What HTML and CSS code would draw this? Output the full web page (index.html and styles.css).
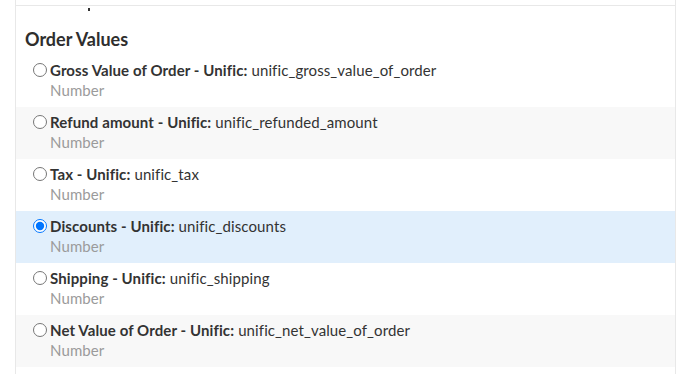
FILE: index.html
```
<!DOCTYPE html>
<html>

	<head>
		<meta charset="UTF-8">
		<title>Order Values</title>
		<link rel="stylesheet" href="styles.css">
	</head>

	<body>
		<div id="wrap">
			<div class="prev"></div>
			<div class="section">
				<span class="tick"></span>
				<h3>Order Values</h3>
				<ul class="fields">
					<li>
						<label><input type="radio" name="field"><b>Gross Value of Order - Unific:</b> unific_gross_value_of_order</label>
						<p>Number</p>
					</li>
					<li class="alt">
						<label><input type="radio" name="field"><b>Refund amount - Unific:</b> unific_refunded_amount</label>
						<p>Number</p>
					</li>
					<li>
						<label><input type="radio" name="field"><b>Tax - Unific:</b> unific_tax</label>
						<p>Number</p>
					</li>
					<li class="on">
						<label><input type="radio" name="field" checked><b>Discounts - Unific:</b> unific_discounts</label>
						<p>Number</p>
					</li>
					<li>
						<label><input type="radio" name="field"><b>Shipping - Unific:</b> unific_shipping</label>
						<p>Number</p>
					</li>
					<li class="alt">
						<label><input type="radio" name="field"><b>Net Value of Order - Unific:</b> unific_net_value_of_order</label>
						<p>Number</p>
					</li>
				</ul>
			</div>
		</div>
	</body>

</html>
```
FILE: styles.css
```
body,
h3,
p,
ul {
	margin: 0;
	padding: 0;
}

body {
	background: #FFFFFF;
	font-family: Lato, "Open Sans", sans-serif;
	color: #333333;
}

#wrap {
	width: 659px;
	margin-left: 15px;
	border-left: 1px solid #E8E8E8;
	border-right: 1px solid #E8E8E8;
	height: 374px;
}

#wrap .prev {
	height: 5px;
	border-bottom: 1px solid #E8E8E8;
}

.section {
	padding-top: 2px;
}

.tick {
	display: block;
	width: 2px;
	height: 3px;
	margin-left: 72px;
	background: #333333;
}

h3 {
	font-size: 18px;
	font-weight: 700;
	line-height: 24px;
	padding: 16px 0 4px 9px;
	color: #2E2E2E;
}

li {
	list-style: none;
	height: 52px;
	padding: 5px 0 0 17px;
	box-sizing: border-box;
	font-size: 15px;
	line-height: 20px;
	letter-spacing: 0.1px;
}

li.alt {
	background: #F8F8F8;
}

li.on {
	background: #E1EFFC;
}

label {
	display: flex;
	align-items: center;
}

label b {
	margin-right: 4px;
}

input {
	width: 14px;
	height: 14px;
	margin: 0 3px 0 0;
}

li p {
	color: #9B9B9B;
	padding-left: 17px;
}
```
